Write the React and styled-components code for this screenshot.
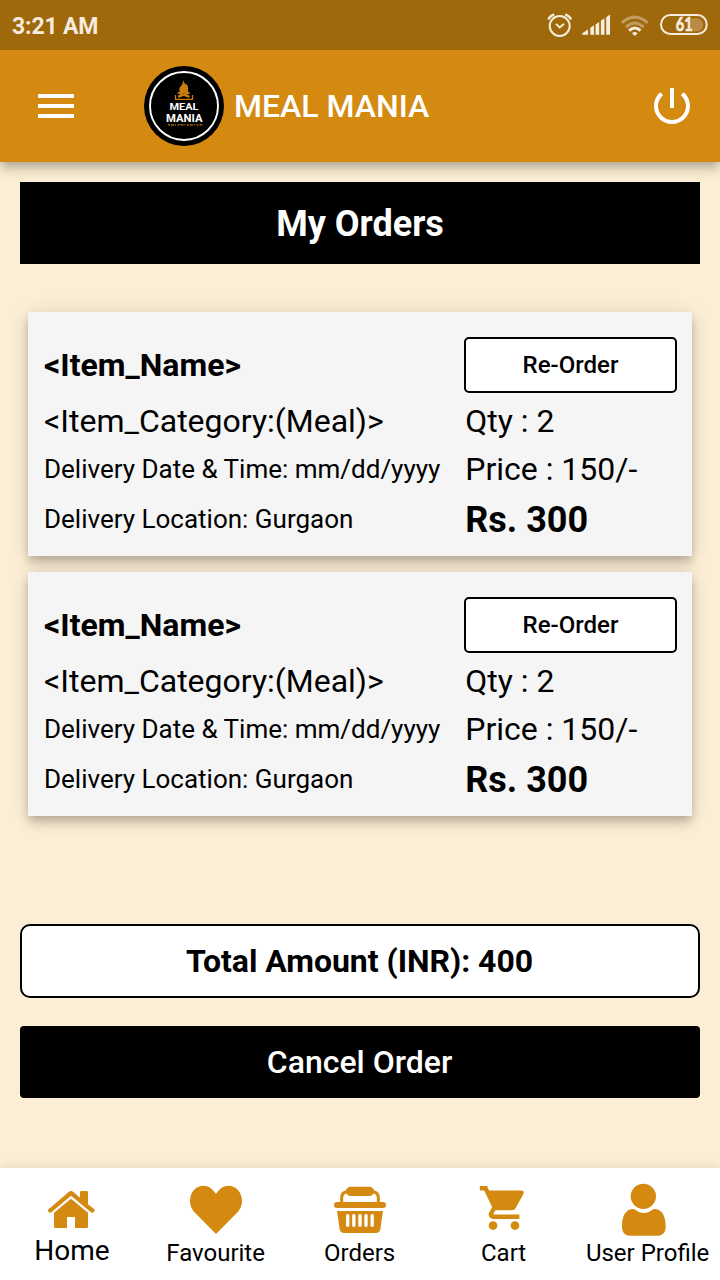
import React from 'react';
import styled, { createGlobalStyle } from 'styled-components';

const GlobalStyle = createGlobalStyle`
  * { box-sizing: border-box; }
  body { margin: 0; background: #fceed4; font-family: Roboto, "Liberation Sans", sans-serif; color: #000; }
  button { font-family: inherit; color: inherit; }
`;

const elevation = '0 4px 8px -2px rgba(0,0,0,.17), 0 8px 10px rgba(0,0,0,.12), 0 2px 20px rgba(0,0,0,.11)';

const Screen = styled.div`
  width: 720px;
  height: 1280px;
  display: flex;
  flex-direction: column;
  background: #fceed4;
  overflow: hidden;
`;

const StatusBar = styled.header`
  position: relative;
  z-index: 1;
  flex: 0 0 50px;
  display: flex;
  align-items: center;
  justify-content: space-between;
  padding: 0 10px 0 12px;
  background: #9f680b;
  color: #f5ecdd;
`;

const Clock = styled.span`
  font-size: 23px;
  font-weight: 700;
  line-height: 46px;
  letter-spacing: -0.15px;
  padding-top: 3px;
`;

const StatusIcons = styled.svg`
  width: 164px;
  height: 50px;
  display: block;
`;

const Toolbar = styled.div`
  flex: 0 0 112px;
  display: flex;
  align-items: center;
  padding: 0 24px 0 32px;
  background: #d48a10;
  color: #fff;
  box-shadow: ${elevation};
`;

const IconButton = styled.button`
  width: 48px;
  height: 48px;
  padding: 0;
  border: 0;
  background: none;
  color: #fff;
  svg { display: block; width: 48px; height: 48px; fill: currentColor; }
`;

const Brand = styled.div`
  flex: 1;
  display: flex;
  align-items: center;
  gap: 10px;
  margin-left: 64px;
`;

const Logo = styled.svg`
  width: 80px;
  height: 80px;
`;

const BrandName = styled.h1`
  margin: 0;
  font-size: 32px;
  font-weight: 500;
  line-height: 40px;
`;

const Content = styled.main`
  flex: 1;
  display: flex;
  flex-direction: column;
  padding: 20px 20px 0;
`;

const Heading = styled.h2`
  margin: 0;
  height: 82px;
  line-height: 84px;
  text-align: center;
  background: #000;
  color: #fff;
  font-size: 36px;
  font-weight: 700;
`;

const OrderList = styled.section`
  display: flex;
  flex-direction: column;
  gap: 16px;
  padding: 48px 8px 0;
`;

const OrderCard = styled.article`
  height: 244px;
  display: grid;
  grid-template-columns: 420px 213px;
  grid-template-rows: 56px 56px 40px 60px;
  align-items: center;
  padding: 25px 15px 7px 16px;
  background: #f5f5f5;
  box-shadow: ${elevation};
`;

const Line = styled.span`
  font-size: ${(p) => p.$size}px;
  font-weight: ${(p) => p.$weight || 400};
  padding-left: ${(p) => (p.$inset ? 1.2 : 0)}px;
  padding-top: ${(p) => p.$drop || 0}px;
  white-space: nowrap;
`;

const ReorderButton = styled.button`
  height: 56px;
  padding: 0;
  border: 2px solid #000;
  border-radius: 5px;
  background: #fff;
  font-size: 24px;
  font-weight: 500;
`;

const Total = styled.div`
  height: 74px;
  margin-top: 108px;
  line-height: 71px;
  padding-right: 1px;
  border: 2px solid #000;
  border-radius: 10px;
  background: #fff;
  text-align: center;
  font-size: 32px;
  font-weight: 700;
  letter-spacing: -0.03px;
`;

const CancelButton = styled.button`
  height: 72px;
  margin-top: 28px;
  padding: 0 1px 0 0;
  border: 0;
  border-radius: 4px;
  background: #000;
  color: #fff;
  font-size: 32px;
  font-weight: 500;
`;

const TabBar = styled.nav`
  flex: 0 0 112px;
  display: grid;
  grid-template-columns: repeat(5, 144px);
  background: #fff;
  box-shadow: 0 -2px 10px rgba(0,0,0,.09);
`;

const Tab = styled.div`
  display: flex;
  flex-direction: column;
  align-items: center;
  padding-top: 12px;
  svg { display: block; width: 60px; height: 56px; color: #d48a10; fill: currentColor; }
`;

const TabLabel = styled.span`
  font-size: ${(p) => p.$size || 24}px;
  line-height: ${(p) => (p.$size ? 30 : 34)}px;
  padding-right: ${(p) => (p.$size ? 0 : 0.8)}px;
  white-space: nowrap;
`;

const orders = [1, 2].map((id) => ({
  id,
  name: '<Item_Name>',
  category: '<Item_Category:(Meal)>',
  date: 'mm/dd/yyyy',
  location: 'Gurgaon',
  qty: 2,
  price: '150/-',
  total: 300,
}));

function Status() {
  return (
    <StatusBar>
      <Clock>3:21 AM</Clock>
      <StatusIcons viewBox="546 0 164 50" fill="none" stroke="#f5ecdd">
        <circle cx="559.7" cy="26" r="10" strokeWidth="2" />
        <path d="M556 23.9l3.7 3.6 4.4-3.8" strokeWidth="2" />
        <path d="M548.3 19.4Q550 15.8 554.2 14.4M571.1 19.4Q569.4 15.8 565.2 14.4" strokeWidth="2.4" />
        <path
          d="M582.3 34.8v-1.6l5.7-3.8v5.4zM590.3 34.8v-7l3.7-2.5v9.5zM595.5 34.8V24.4l3.7-2.5v12.9zM600.9 34.8V20.6l3.6-2.4v16.6zM606.2 34.8V17.2l3.8-2.6v20.2z"
          fill="#f5ecdd"
          stroke="none"
        />
        <path d="M621.8 22.8Q634.8 11.5 647.8 22.8" strokeWidth="3" opacity=".4" />
        <path d="M626 27.1Q634.8 19 643.6 27.1" strokeWidth="3" opacity=".4" />
        <path d="M629.1 30.6Q634.8 25.5 640.5 30.6" strokeWidth="3" />
        <path d="M634.8 36l-2.8-2.7q2.8-2.4 5.6 0z" fill="#f5ecdd" stroke="none" />
        <rect x="661" y="15" width="45.8" height="19" rx="9.5" strokeWidth="2" />
        <path d="M691 18.3h5.6a6.5 6.5 0 0 1 0 13H691z" fill="#b98b47" stroke="none" />
        <text
          x="675.8"
          y="31"
          fontSize="18"
          fontWeight="700"
          fill="#f5ecdd"
          strokeWidth="0.7"
          textLength="17"
          lengthAdjust="spacingAndGlyphs"
          fontFamily="Lato, sans-serif"
        >
          61
        </text>
      </StatusIcons>
    </StatusBar>
  );
}

function BrandLogo() {
  return (
    <Logo viewBox="0 0 80 80">
      <circle cx="40" cy="40" r="40" />
      <circle cx="40" cy="40" r="34" fill="none" stroke="#fff" strokeWidth="1.9" />
      <path d="M39 14q1 3 3.3 5 .4-1 .3-1.6 3 5 .5 9.6h-6.500q-3-4 .8-7.500 2-2.500 1.600-5.500z" fill="#c67d0d" />
      <path d="M34 26.500l11.500 4.300M45.500 26.500L34 30.800" stroke="#c67d0d" strokeWidth="2.3" />
      <path d="M31.500 29v4.400h17V29" fill="none" stroke="#c67d0d" strokeWidth="1.3" />
      <text x="25.500" y="44" fontSize="9.8" fontWeight="700" fill="#fff" textLength="29" lengthAdjust="spacingAndGlyphs">MEAL</text>
      <text x="22" y="56" fontSize="11" fontWeight="700" fill="#fff" textLength="36.5" lengthAdjust="spacingAndGlyphs">MANIA</text>
      <path d="M24 58.800h35" stroke="#b8730b" strokeWidth="1.2" strokeDasharray="2 1 3 1 1 1.5" />
    </Logo>
  );
}

function Order({ order }) {
  return (
    <OrderCard>
      <Line $size={32} $weight={700}>{order.name}</Line>
      <ReorderButton>Re-Order</ReorderButton>
      <Line $size={32}>{order.category}</Line>
      <Line $size={32} $inset>Qty : {order.qty}</Line>
      <Line $size={26}>Delivery Date &amp; Time: {order.date}</Line>
      <Line $size={32} $inset>Price : {order.price}</Line>
      <Line $size={26}>Delivery Location: {order.location}</Line>
      <Line $size={36} $weight={700} $inset $drop={2}>Rs. {order.total}</Line>
    </OrderCard>
  );
}

function HomeIcon() {
  return (
    <svg viewBox="126 90 180 168">
      <path d="M144 179L206 126Q213 120 220 126L240 143V127Q240 123 244 123H260Q264 123 264 127V163L283 178Q286 182 282 186Q277 190 273 187L213 137L154 187Q150 190 146 186Q141 182 144 179Z" />
      <path d="M213 146L264 188V230Q264 234 260 234H225V201H201V234H166Q162 234 162 230V188Z" />
    </svg>
  );
}

function HeartIcon() {
  return (
    <svg viewBox="558 90 180 168">
      <path d="M645 249L582 185C574 176 570 166 570 153C570 127 587 107 610 107C627 107 638 117 648 132C658 117 669 107 686 107C709 107 726 127 726 153C726 166 722 176 714 185L651 249Q648 252 645 249Z" />
    </svg>
  );
}

function BasketIcon() {
  return (
    <svg viewBox="270 90 180 168">
      <path d="M305 160V143Q305 127 321 125M415 160V143Q415 127 399 125" fill="none" stroke="currentColor" strokeWidth="9" />
      <path d="M330 110.5H390Q397 111 401 118Q405 124 401 130Q397 138 390 138H330Q323 138 319 130Q315 124 319 118Q323 111 330 110.5Z" />
      <rect x="282" y="156" width="156" height="18" rx="9" />
      <path d="M291 183H429L421 238Q419 249 408 249H312Q301 249 299 238Z" />
      {[318, 336.5, 355, 373, 391.5].map((x) => (
        <rect key={x} x={x} y="192" width="10" height="39" rx="5" fill="#fff" />
      ))}
    </svg>
  );
}

function CartIcon() {
  return (
    <svg viewBox="-1.64 -0.73 27.27 25.45">
      <path d="M7 18c-1.1 0-1.99.9-1.99 2S5.9 22 7 22s2-.9 2-2-.9-2-2-2zM1 2v2h2l3.6 7.59-1.35 2.45c-.16.28-.25.61-.25.96 0 1.1.9 2 2 2h12v-2H7.42c-.14 0-.25-.11-.25-.25l.03-.12.9-1.63h7.45c.75 0 1.41-.41 1.75-1.03l3.58-6.49c.08-.14.12-.31.12-.48 0-.55-.45-1-1-1H5.21l-.94-2H1zm16 16c-1.1 0-1.99.9-1.99 2s.89 2 1.99 2 2-.9 2-2-.9-2-2-2z" />
    </svg>
  );
}

function UserIcon() {
  return (
    <svg viewBox="414 90 180 168">
      <circle cx="490" cy="139" r="38" />
      <path d="M456 177C438 179 426 196 426 230C426 248 436 257.5 452 257.5H531C547 257.5 557 248 557 230C557 196 545 179 527 177C521 176 518 178 513 182C499 191 484 191 470 182C465 178 462 176 456 177Z" />
    </svg>
  );
}

const tabs = [
  { label: 'Home', Icon: HomeIcon, size: 28 },
  { label: 'Favourite', Icon: HeartIcon },
  { label: 'Orders', Icon: BasketIcon },
  { label: 'Cart', Icon: CartIcon },
  { label: 'User Profile', Icon: UserIcon },
];

export default function App() {
  return (
    <>
      <GlobalStyle />
      <Screen>
        <Status />
        <Toolbar>
          <IconButton aria-label="Menu">
            <svg viewBox="0 0 24 24"><path d="M3 18h18v-2H3v2zm0-5h18v-2H3v2zm0-7v2h18V6H3z" /></svg>
          </IconButton>
          <Brand>
            <BrandLogo />
            <BrandName>MEAL MANIA</BrandName>
          </Brand>
          <IconButton aria-label="Log out">
            <svg viewBox="0 0 24 24"><path d="M13 3h-2v10h2V3zm4.83 2.17l-1.42 1.42C17.99 7.86 19 9.81 19 12c0 3.87-3.13 7-7 7s-7-3.13-7-7c0-2.19 1.01-4.14 2.58-5.42L6.17 5.17C4.23 6.82 3 9.26 3 12c0 4.97 4.03 9 9 9s9-4.03 9-9c0-2.74-1.23-5.18-3.17-6.83z" /></svg>
          </IconButton>
        </Toolbar>
        <Content>
          <Heading>My Orders</Heading>
          <OrderList>
            {orders.map((order) => <Order key={order.id} order={order} />)}
          </OrderList>
          <Total>Total Amount (INR): 400</Total>
          <CancelButton>Cancel Order</CancelButton>
        </Content>
        <TabBar>
          {tabs.map(({ label, Icon, size }) => (
            <Tab key={label}>
              <Icon />
              <TabLabel $size={size}>{label}</TabLabel>
            </Tab>
          ))}
        </TabBar>
      </Screen>
    </>
  );
}
